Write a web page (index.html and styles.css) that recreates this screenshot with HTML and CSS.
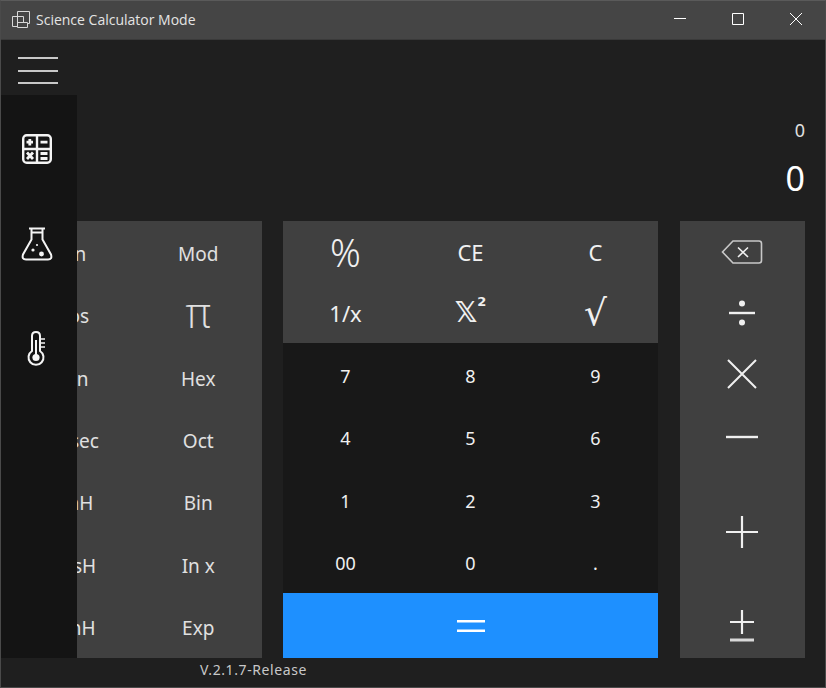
FILE: index.html
```html
<!DOCTYPE html>
<html lang="en">
<head>
    <meta charset="UTF-8">
    <title>Science Calculator Mode</title>
    <link rel="stylesheet" href="styles.css">
</head>
<body>
    <div class="window">
        <div class="title-bar">
            <svg class="title-icon" width="18" height="18" viewBox="0 0 18 18" fill="none" stroke="#d8d8d8" stroke-width="1">
                <path d="M5.5 5V0.5H17.5V12.5H15"/>
                <path d="M5.5 5.5H0.5V15.5H5.5"/>
                <path d="M5.5 5.5H11.5V11.5"/>
                <path d="M5.5 5V16.5H15.5V11.5H5.5"/>
            </svg>
            <span class="title-text">Science Calculator Mode</span>
            <div class="win-controls">
                <svg class="win-btn" width="12" height="12" viewBox="0 0 12 12" stroke="#fff"><path d="M0 5.5H12"/></svg>
                <svg class="win-btn" width="12" height="12" viewBox="0 0 12 12" fill="none" stroke="#fff"><path d="M0.5 0.5H11.5V11.5H0.5Z"/></svg>
                <svg class="win-btn" width="12" height="12" viewBox="0 0 12 12" stroke="#fff"><path d="M0 0L12 12M12 0L0 12"/></svg>
            </div>
        </div>

        <div class="menu-row">
            <div class="hamburger"><span></span><span></span><span></span></div>
        </div>

        <div class="display">
            <div class="display-history">0</div>
            <div class="display-value">0</div>
        </div>

        <div class="keypad">
            <div class="keys keys-science">
                <button class="key">Sin</button><button class="key">Mod</button>
                <button class="key">Cos</button><button class="key key-pi">π</button>
                <button class="key">Tan</button><button class="key">Hex</button>
                <button class="key">Cosec</button><button class="key">Oct</button>
                <button class="key">SinH</button><button class="key">Bin</button>
                <button class="key">CosH</button><button class="key">In x</button>
                <button class="key">TanH</button><button class="key">Exp</button>
            </div>

            <div class="keys-main">
                <div class="keys keys-top">
                    <button class="key key-percent">%</button>
                    <button class="key">CE</button>
                    <button class="key">C</button>
                    <button class="key">1/x</button>
                    <button class="key key-square">𝕏<sup>2</sup></button>
                    <button class="key key-root">√</button>
                </div>
                <div class="keys keys-digits">
                    <button class="key">7</button><button class="key">8</button><button class="key">9</button>
                    <button class="key">4</button><button class="key">5</button><button class="key">6</button>
                    <button class="key">1</button><button class="key">2</button><button class="key">3</button>
                    <button class="key">00</button><button class="key">0</button><button class="key">.</button>
                </div>
                <button class="key key-equals">
                    <svg width="28" height="12" viewBox="0 0 28 12" stroke="#fff" stroke-width="2.4"><path d="M0 1.2H28M0 10.8H28"/></svg>
                </button>
            </div>

            <div class="keys-ops">
                <button class="key">
                    <svg width="42" height="24" viewBox="0 0 42 24" fill="none" stroke="#c8c8c8" stroke-width="1.6">
                        <path d="M12 1H38Q40.5 1 40.5 3.5V20.5Q40.5 23 38 23H12L1.5 12Z"/>
                        <path d="M17 7.5L27 17M27 7.5L17 17" stroke="#f0f0f0"/>
                    </svg>
                </button>
                <button class="key">
                    <svg width="26" height="26" viewBox="0 0 26 26" fill="#f0f0f0">
                        <circle cx="13" cy="3.5" r="3"/>
                        <rect x="0" y="11.8" width="26" height="2.4"/>
                        <circle cx="13" cy="22.5" r="3"/>
                    </svg>
                </button>
                <button class="key">
                    <svg width="30" height="30" viewBox="0 0 30 30" stroke="#f0f0f0" stroke-width="2"><path d="M1 1L29 29M29 1L1 29"/></svg>
                </button>
                <button class="key">
                    <svg width="32" height="4" viewBox="0 0 32 4" stroke="#f0f0f0" stroke-width="2.4"><path d="M0 2H32"/></svg>
                </button>
                <button class="key key-plus">
                    <svg width="32" height="32" viewBox="0 0 32 32" stroke="#f0f0f0" stroke-width="2.2"><path d="M0 16H32M16 0V32"/></svg>
                </button>
                <button class="key">
                    <svg width="26" height="32" viewBox="0 0 26 32" stroke="#f0f0f0"><path d="M1 12H25M13 0V24" stroke-width="2.2"/><path d="M1 30H25" stroke-width="3" stroke="#d8d8d8"/></svg>
                </button>
            </div>
        </div>

        <div class="footer"><span class="version">V.2.1.7-Release</span></div>

        <div class="side-panel">
            <svg width="30" height="30" viewBox="0 0 30 30" fill="none" stroke="#f4f4f4" stroke-width="2.4">
                <rect x="1.2" y="1.2" width="27.6" height="27.6" rx="3.5"/>
                <path d="M15 1V29M1 15H29"/>
                <path d="M4.5 8.2H11M7.8 5V11.5M18.5 8.2H25.5M5 18.5L11 25M11 18.5L5 25M18.5 19.5H25.5M18.5 24.5H25.5" stroke-width="2.8"/>
            </svg>
            <svg class="icon-flask" width="32" height="34" viewBox="0 0 32 34" fill="none" stroke="#f4f4f4" stroke-width="2">
                <path d="M8 1.5H24M11 5.5H21M10.5 2V12.5L2 27.5Q0.5 32.5 5 32.5H27Q31.5 32.5 30 27.5L21.5 12.5V2"/>
                <circle cx="12" cy="23" r="1.6" fill="#f4f4f4" stroke="none"/>
                <circle cx="20.5" cy="27" r="2.4" fill="#f4f4f4" stroke="none"/>
                <circle cx="16" cy="18" r="1.1" fill="#f4f4f4" stroke="none"/>
            </svg>
            <svg class="icon-thermo" width="20" height="36" viewBox="0 0 20 36" fill="none" stroke="#f4f4f4" stroke-width="2">
                <path d="M5 20V5Q5 1 9 1Q13 1 13 5V20A7.5 7.5 0 1 1 5 20Z"/>
                <circle cx="9" cy="26.5" r="3.6" fill="#f4f4f4" stroke="none"/>
                <path d="M9 26V9"/>
                <path d="M14 8H18M14 12H18M14 16H18" stroke-width="1.6"/>
            </svg>
        </div>
    </div>
</body>
</html>
```

FILE: styles.css
```css
* {
    box-sizing: border-box;
}

body {
    margin: 0;
    background: #1f1f1f;
    font-family: "Noto Sans", "Open Sans", sans-serif;
    color: #f0f0f0;
}

.window {
    position: relative;
    width: 826px;
    height: 688px;
    display: flex;
    flex-direction: column;
    background: #1f1f1f;
    border: 1px solid #4a4a4a;
    border-top-color: #5a5a5a;
    overflow: hidden;
}

.title-bar {
    height: 39px;
    flex: none;
    display: flex;
    align-items: center;
    background: #454545;
    padding: 0 0 2px 11px;
    border-bottom: 1px solid #3a3a3a;
}

.title-icon {
    margin-right: 6px;
    margin-top: 1px;
}

.title-text {
    font-family: "Open Sans", sans-serif;
    font-size: 14px;
    color: #e4e4e4;
}

.win-controls {
    margin-left: auto;
    display: flex;
    gap: 46px;
    padding-right: 23px;
}

.win-btn {
    display: block;
}

.menu-row {
    height: 55px;
    flex: none;
    padding: 17px 0 0 17px;
}

.hamburger {
    width: 40px;
    display: flex;
    flex-direction: column;
    gap: 10.5px;
}

.hamburger span {
    display: block;
    height: 2px;
    background: #c8c8c8;
}

.display {
    height: 126px;
    flex: none;
    padding: 23px 20px 0 0;
    text-align: right;
}

.display-history {
    font-size: 18px;
    line-height: 24px;
    color: #e0e0e0;
}

.display-value {
    font-size: 34px;
    line-height: 46px;
    margin-top: 13px;
    color: #fff;
}

.keypad {
    height: 437px;
    flex: none;
    display: flex;
    padding-left: 10px;
}

.keys {
    display: grid;
    grid-template-columns: repeat(3, 125px);
}

.key {
    display: flex;
    align-items: center;
    justify-content: center;
    padding: 0;
    border: none;
    background: none;
    color: #f0f0f0;
    font-family: inherit;
    font-size: 22px;
}

.keys-science {
    width: 251px;
    margin-right: 21px;
    grid-template-columns: repeat(2, 125.5px);
    grid-template-rows: repeat(7, 1fr);
    background: #404040;
}

.keys-science .key {
    color: #e0e0e0;
    font-size: 19px;
    padding: 3px 2px 0 0;
}

.keys-science .key-pi {
    font-family: "Open Sans", sans-serif;
    font-size: 42px;
    font-weight: 300;
    line-height: 1;
    padding: 0 2px 5px 0;
}

.keys-main {
    width: 375px;
    display: flex;
    flex-direction: column;
    margin-right: 22px;
}

.keys-top {
    height: 122px;
    grid-template-rows: repeat(2, 1fr);
    background: #404040;
}

.key-percent {
    font-size: 38px;
    font-weight: 300;
}

.key-square {
    font-family: "DejaVu Sans", sans-serif;
    font-size: 28px;
    font-weight: bold;
}

.key-square sup {
    font-size: 13px;
    line-height: 0;
    align-self: flex-start;
    margin-top: 20px;
}

.key-root {
    font-family: "DejaVu Sans", sans-serif;
    font-size: 36px;
}

.keys-digits {
    height: 250px;
    grid-template-rows: repeat(4, 1fr);
    background: #181818;
}

.keys-digits .key {
    font-size: 18px;
    padding-top: 3px;
}

.key-equals {
    height: 65px;
    width: 100%;
    background: #1e90ff;
}

.keys-ops {
    width: 125px;
    display: grid;
    grid-template-rows: 61px 61px 62.5px 62.5px 125px 65px;
    background: #404040;
}

.keys-ops .key {
    padding-right: 2px;
}

.keys-ops .key-plus {
    padding-top: 2px;
}

.footer {
    flex: 1;
    padding-left: 199px;
}

.version {
    font-size: 14px;
    line-height: 22px;
    letter-spacing: 0.6px;
    color: #c8c8c8;
}

.side-panel {
    position: absolute;
    top: 94px;
    left: 0;
    width: 76px;
    height: 563px;
    display: flex;
    flex-direction: column;
    align-items: center;
    padding: 39px 4px 0 0;
    background: #141414;
}

.icon-flask {
    margin-top: 63px;
}

.icon-thermo {
    margin-top: 70px;
}
```
